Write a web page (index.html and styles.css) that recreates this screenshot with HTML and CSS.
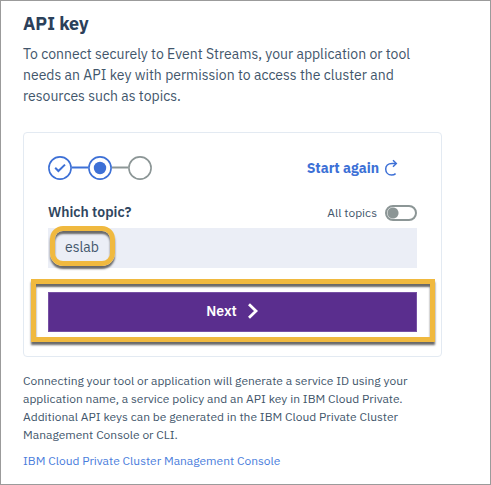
FILE: index.html
```
<!DOCTYPE html>
<html lang="en">
<head>
<meta charset="utf-8">
<meta name="viewport" content="width=device-width, initial-scale=1">
<title>API key</title>
<link rel="stylesheet" href="styles.css">
</head>
<body>
<main class="panel">
  <h1 class="title">API key</h1>
  <p class="intro">To connect securely to Event Streams, your application or tool needs an API key with permission to access the cluster and resources such as topics.</p>
  <form class="card">
    <div class="row">
      <svg class="steps" width="104" height="24" viewBox="0 0 104 24" fill="none" stroke-width="1.6" role="img" aria-label="Step 2 of 3">
        <path d="M24 11.500H40" stroke="#3d70d6" stroke-width="2"/>
        <path d="M64 11.500H80" stroke="#8c9696" stroke-width="2"/>
        <circle cx="12" cy="12" r="11.1" stroke="#3d70d6"/>
        <path d="M7.2 11.8L10.4 15L17 8.600" stroke="#3d70d6" stroke-width="2"/>
        <circle cx="52" cy="12" r="11.1" stroke="#3d70d6"/>
        <circle cx="52" cy="12" r="6.200" fill="#3d70d6"/>
        <circle cx="92" cy="12" r="11.1" stroke="#8c9696"/>
      </svg>
      <a class="restart" href="#">Start again
        <svg width="14" height="18" viewBox="0 0 14 18" fill="none" stroke="#3d70d6" stroke-width="1.500">
          <path d="M12 4.500H8C4 4.500 1.700 7 1.700 10C1.700 13.500 4.200 16 7.500 16C9.300 16 10.600 15.500 11.600 14.600"/>
          <path d="M9 1.200L12.300 4.500L9 7.800"/>
        </svg>
      </a>
    </div>
    <div class="row labels">
      <label class="question" for="topic">Which topic?</label>
      <label class="all">All topics <input class="toggle" type="checkbox"></label>
    </div>
    <div class="field">
      <input class="topic" id="topic" type="text" value="eslab">
      <span class="mark mark-topic"></span>
    </div>
    <div class="action">
      <button class="next" type="button">Next
        <svg width="12" height="16" viewBox="0 0 12 16" fill="none" stroke="#fff" stroke-width="2.800"><path d="M2 1.200L9 8L2 14.800"/></svg>
      </button>
      <span class="mark mark-next"></span>
    </div>
  </form>
  <p class="note">Connecting your tool or application will generate a service ID using your application name, a service policy and an API key in IBM Cloud Private. Additional API keys can be generated in the IBM Cloud Private Cluster Management Console or CLI.</p>
  <a class="console" href="#">IBM Cloud Private Cluster Management Console</a>
</main>
</body>
</html>
```
FILE: styles.css
```
* { box-sizing: border-box; }
body {
  margin: 0;
  background: #fff;
  color: #42566b;
  font-family: "IBM Plex Sans", Roboto, sans-serif;
}
.panel {
  min-height: 100vh;
  padding: 11px 48px 0 22px;
  border: 1px solid #9b9b9b;
}
.title {
  margin: 0 0 8px;
  color: #2b405a;
  font-size: 18px;
  line-height: 24px;
  font-weight: 700;
}
.intro {
  margin: 0;
  font-size: 14px;
  line-height: 21px;
}
.card {
  margin: 25px 0 15px;
  padding: 23px 24px 24px;
  border: 1px solid #e3eaf2;
  border-radius: 4px;
}
.row {
  display: flex;
  align-items: center;
  justify-content: space-between;
}
.steps { display: block; }
.restart {
  display: flex;
  align-items: center;
  gap: 5px;
  margin-right: 19px;
  color: #3d70d6;
  font-size: 14px;
  line-height: 24px;
  font-weight: 700;
  text-decoration: none;
}
.labels {
  height: 24px;
  margin-top: 20px;
}
.question {
  color: #2f465f;
  font-size: 14px;
  font-weight: 600;
}
.all {
  display: flex;
  align-items: center;
  gap: 8px;
  font-size: 12px;
}
.toggle {
  appearance: none;
  width: 32px;
  height: 16px;
  margin: 2px 0 0;
  border: 2px solid #8c9696;
  border-radius: 8px;
  background: radial-gradient(circle at 6px 6px, #8c9696 5px, #fff 6px);
}
.field, .action { position: relative; }
.field { margin-top: 4px; }
.topic {
  display: block;
  width: 100%;
  height: 40px;
  padding: 0 17px 2px;
  border: 0;
  border-radius: 0;
  background: #ebeef6;
  color: #42566b;
  font: 14px "IBM Plex Sans", Roboto, sans-serif;
}
.action { margin-top: 24px; }
.next {
  display: flex;
  align-items: center;
  justify-content: center;
  gap: 10px;
  width: 100%;
  height: 40px;
  padding: 0 0 3px;
  border: 1px solid #7650a4;
  background: #5a2e8e;
  color: #fff;
  font: 600 14px "IBM Plex Sans", Roboto, sans-serif;
}
.mark {
  position: absolute;
  border: 5px solid #f0b93f;
  pointer-events: none;
  box-shadow: 0 3px 2px #696969, inset 0 3px 2px #696969;
}
.mark-topic {
  top: -2px;
  left: 2px;
  width: 65px;
  height: 40px;
  border-radius: 13px;
}
.mark-next {
  inset: -13px -18px -10px -17px;
}
.note, .console {
  font-size: 12px;
  line-height: 18px;
}
.note { margin: 0 0 8px; }
.console {
  display: block;
  color: #4a7ddc;
  text-decoration: none;
}
```
